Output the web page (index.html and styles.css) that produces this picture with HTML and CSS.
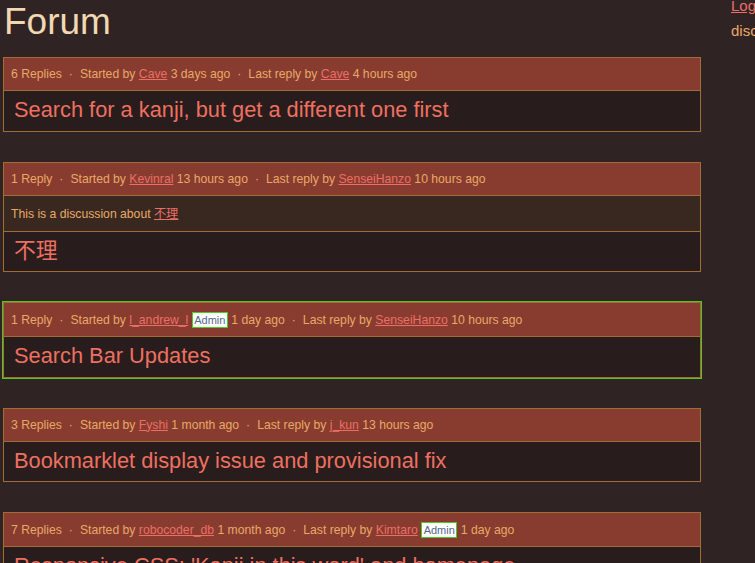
FILE: index.html
```html
<!DOCTYPE html>
<html>
<head>
<meta charset="utf-8">
<link rel="stylesheet" href="styles.css">
</head>
<body>
<div class="page">
  <main class="main">
    <h1 class="title">Forum</h1>

    <div class="card">
      <div class="meta">6 Replies<span class="dot">·</span>Started by <a href="#">Cave</a> 3 days ago<span class="dot">·</span>Last reply by <a href="#">Cave</a> 4 hours ago</div>
      <div class="subject">Search for a kanji, but get a different one first</div>
    </div>

    <div class="card">
      <div class="meta">1 Reply<span class="dot">·</span>Started by <a href="#">Kevinral</a> 13 hours ago<span class="dot">·</span>Last reply by <a href="#">SenseiHanzo</a> 10 hours ago</div>
      <div class="about">This is a discussion about <a href="#">不理</a></div>
      <div class="subject">不理</div>
    </div>

    <div class="card card-admin">
      <div class="meta">1 Reply<span class="dot">·</span>Started by <a href="#">l_andrew_l</a> <span class="badge">Admin</span> 1 day ago<span class="dot">·</span>Last reply by <a href="#">SenseiHanzo</a> 10 hours ago</div>
      <div class="subject">Search Bar Updates</div>
    </div>

    <div class="card">
      <div class="meta">3 Replies<span class="dot">·</span>Started by <a href="#">Fyshi</a> 1 month ago<span class="dot">·</span>Last reply by <a href="#">j_kun</a> 13 hours ago</div>
      <div class="subject">Bookmarklet display issue and provisional fix</div>
    </div>

    <div class="card">
      <div class="meta">7 Replies<span class="dot">·</span>Started by <a href="#">robocoder_db</a> 1 month ago<span class="dot">·</span>Last reply by <a href="#">Kimtaro</a> <span class="badge">Admin</span> 1 day ago</div>
      <div class="subject">Responsive CSS: 'Kanji in this word' and homepage</div>
    </div>
  </main>
  <aside class="side">
    <a href="#" class="login">Login</a>
    <p class="side-text">discussions</p>
  </aside>
</div>
</body>
</html>
```

FILE: styles.css
```css
html, body {
  margin: 0;
  padding: 0;
  background: #302323;
  font-family: "Liberation Sans", Arial, "Noto Sans CJK JP", sans-serif;
  overflow: hidden;
}

.page {
  display: flex;
  gap: 30px;
  padding-left: 3px;
  width: 1000px;
}

.main {
  width: 698px;
  flex: none;
}

.title {
  font-weight: normal;
  font-size: 37px;
  line-height: 44px;
  color: #f2d8b2;
  margin: 0 0 13px 1px;
}

.card {
  border: 1px solid #a06c38;
  margin-bottom: 30px;
  background: #281c1c;
}

.card-admin {
  outline: 1px solid #4fc828;
  margin-top: 1px;
}

.meta {
  background: #873c2f;
  color: #eaa868;
  font-size: 12.2px;
  line-height: 16px;
  padding: 8px 7px;
  border-bottom: 1px solid #a06c38;
}

.meta a, .about a {
  color: #ec6e66;
}

.dot {
  margin: 0 7px;
}

.badge {
  display: inline-block;
  background: #fff;
  color: #55688c;
  border: 1px solid #4fc828;
  font-size: 11px;
  line-height: 14px;
  padding: 0 1.5px;
  margin-top: 1px;
}

.about {
  background: #382820;
  color: #eaa868;
  font-size: 12.2px;
  line-height: 16px;
  padding: 10px 7px 9px;
  border-bottom: 1px solid #a06c38;
}

.subject {
  color: #ee7060;
  font-size: 21.8px;
  line-height: 24.5px;
  padding: 7px 10px 8px;
}

.side {
  flex: none;
  width: 200px;
  font-size: 15px;
  line-height: 20px;
}

.login {
  color: #ec6e66;
  display: block;
  margin-top: -4px;
}

.side-text {
  color: #eaa868;
  margin: 5px 0 0;
}
```
